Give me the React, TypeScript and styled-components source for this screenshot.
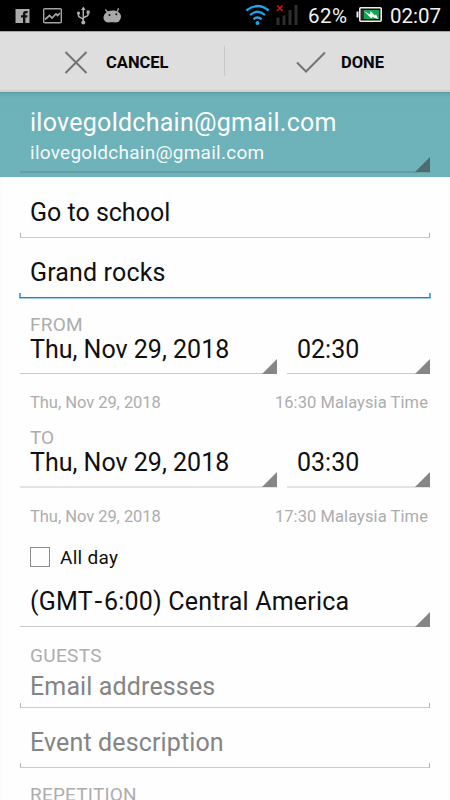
import React from 'react';
import styled, { createGlobalStyle } from 'styled-components';

const GlobalStyle = createGlobalStyle`
  * { box-sizing: border-box; }
  body { margin: 0; background: #fefefe; font-family: Roboto, sans-serif; }
`;

const Screen = styled.div`
  width: 450px;
  height: 800px;
  overflow: hidden;
  display: flex;
  flex-direction: column;
  background: #fefefe;
`;

const StatusBar = styled.header`
  height: 31px;
  flex: none;
  display: flex;
  align-items: center;
  justify-content: space-between;
  padding: 0 8px 0 14px;
  background: #000;
`;

const StatusText = styled.span<{ $width: number; $spacing?: number }>`
  width: ${p => p.$width}px;
  padding-top: 2px;
  font-size: 20.5px;
  line-height: 29px;
  color: #f2f2f2;
  letter-spacing: ${p => p.$spacing ?? 0}px;
  white-space: nowrap;
`;

const StatusSide = styled.div`
  display: flex;
  align-items: center;
  gap: 8px;
  height: 31px;
`;

const ActionBar = styled.div`
  height: 61px;
  flex: none;
  display: grid;
  grid-template-columns: 224px 1px 225px;
  background: #dedede;
  border-top: 1px solid #a4a4a4;
  border-bottom: 2px solid #cfcfcf;
`;

const Action = styled.button<{ $start: number; $gap: number }>`
  display: flex;
  align-items: center;
  gap: ${p => p.$gap}px;
  padding: 3px 0 0 ${p => p.$start}px;
  border: 0;
  background: none;
  font: 700 16.5px/20px Roboto, sans-serif;
  color: #050505;
`;

const Divider = styled.div`
  width: 1px;
  height: 30px;
  align-self: center;
  background: #c8c8c8;
`;

const Account = styled.div`
  height: 85px;
  flex: none;
  padding: 14px 20px 0;
  background: linear-gradient(#569ba1 0, #66abb2 2px, #6db1b9 6px, #6eb2ba 100%);
  color: #fff;
`;

const AccountInner = styled.div`
  position: relative;
  height: 67px;
  padding-left: 10px;
  border-bottom: 2px solid #669fa5;
`;

const Text = styled.div<{ $size: number; $line: number; $spacing?: number; $color?: string }>`
  font-size: ${p => p.$size}px;
  line-height: ${p => p.$line}px;
  letter-spacing: ${p => p.$spacing ?? 0}px;
  color: ${p => p.$color ?? '#101010'};
  white-space: nowrap;
`;

const WideHyphen = styled.span`
  display: inline-block;
  margin: 0 1.5px 0 2.5px;
  transform: scaleX(1.12);
`;

const Form = styled.main`
  flex: 1;
  margin: 0 1px;
  display: flex;
  flex-direction: column;
  border: solid #fafafa;
  border-width: 0 1px;
  padding: 0 18px;
`;

const Field = styled.div<{ $height: number; $top: number }>`
  position: relative;
  flex: none;
  height: ${p => p.$height}px;
  padding: ${p => p.$top}px 0 0 10px;
`;

const Underline = styled.i<{ $active?: boolean }>`
  position: absolute;
  left: ${p => (p.$active ? -1 : 0)}px;
  right: ${p => (p.$active ? -1 : 0)}px;
  bottom: 0;
  height: 5px;
  border-style: solid;
  border-color: ${p => (p.$active ? 'transparent #5badd6 #1f83bb' : 'transparent #b4b4b4 #cbcbcb')};
  border-width: ${p => (p.$active ? '0 2px 1px' : '0 1px 1px')};
  box-shadow: ${p => (p.$active ? '0 1px 0 #a3cde3' : 'none')};
`;

const Pair = styled.div`
  display: grid;
  grid-template-columns: 257px 143px;
  column-gap: 10px;
  flex: none;
`;

const Spinner = styled.div<{ $height: number; $top: number; $thick?: boolean }>`
  position: relative;
  flex: none;
  height: ${p => p.$height}px;
  padding: ${p => p.$top}px 0 0 10px;
  border-bottom: ${p => (p.$thick ? '2px solid #e3e3e3' : '1px solid #c8c8c8')};
`;

const Corner = styled.i<{ $color?: string }>`
  position: absolute;
  right: 0;
  bottom: -1px;
  width: 15px;
  height: 15px;
  background: ${p => p.$color ?? '#868686'};
  clip-path: polygon(100% 0, 100% 100%, 0 100%);
`;

const LabelRow = styled.div<{ $height: number; $top: number }>`
  flex: none;
  height: ${p => p.$height}px;
  padding: ${p => p.$top}px 0 0 10px;
`;

const LocalTime = styled.div<{ $height: number }>`
  flex: none;
  display: flex;
  justify-content: space-between;
  height: ${p => p.$height}px;
  padding: 18px 2px 0 10px;
`;

const CheckRow = styled.div`
  flex: none;
  display: flex;
  align-items: center;
  gap: 10px;
  height: 26px;
  padding-left: 10px;
`;

const CheckLabel = styled(Text)`
  padding-top: 2px;
`;

const Box = styled.span`
  width: 20px;
  height: 20px;
  border: 1px solid #8d8d8d;
`;

const GREY = '#adadad';
const HINT = '#848484';

function NotificationIcons() {
  return (
    <svg width="110" height="31" viewBox="14 0 110 31">
      <rect x="15.5" y="9" width="14" height="14" fill="#ababab" />
      <path d="M23 23v-5.400h-2v-2.300h2v-1.500c0-2 1-2.900 2.800-2.900h1.800v2.300h-1.200c-.8 0-1 .3-1 1v1.100h2.100l-.3 2.300h-1.800V23z" fill="#111" />
      <rect x="43.700" y="8.700" width="17.600" height="14" rx="1" fill="none" stroke="#a4a4a4" strokeWidth="1.400" />
      <path d="M45 19.500l4.500-4 2.500 2.500 4-4 1.700 1.500L60 13" fill="none" stroke="#a4a4a4" strokeWidth="1.700" />
      <g fill="none" stroke="#b0b0b0" strokeWidth="1.500">
        <path d="M83.300 9v13M78.500 13v3c0 1.500 4.800 2 4.800 4M88 12v3c0 1.500-4.700 1.500-4.700 3.500" />
      </g>
      <path d="M83.300 6.500l2.300 3.600H81zM86.600 10.500h3v3.200h-3z" fill="#b0b0b0" />
      <circle cx="78.500" cy="13" r="1.600" fill="#b0b0b0" />
      <circle cx="83.300" cy="22.400" r="2" fill="#b0b0b0" />
      <path d="M103.500 18c0-4.500 4-7.500 9-7.500s8.700 2.500 8.500 6.500c-.2 2.200-1.300 2.700-2 4.500-2 1.300-4.300.8-6.500.8-3 0-5 .6-7-.5-.8-1.200-2-2-2-3.800z" fill="#a9a9a9" />
      <path d="M108 12.500l-2.700-3M117 12l1.600-3.800" stroke="#a9a9a9" strokeWidth="1.300" />
      <circle cx="109.500" cy="15" r="1" fill="#111" />
      <circle cx="116.300" cy="14.300" r="1" fill="#111" />
    </svg>
  );
}

function WifiSignalIcons() {
  return (
    <svg width="55" height="31" viewBox="245 0 55 31">
      <g fill="none" stroke="#1ba5ea" strokeWidth="2.300">
        <path d="M246.300 10.500q11.200-9 22.400 0M250 15q7.500-6.500 15 0M253.500 19.300q4-3.600 8 0" />
      </g>
      <circle cx="257.500" cy="23" r="2" fill="#1ba5ea" />
      <path d="M276.500 17.500h3V25h-3zM282.500 15.500h3V25h-3zM288.500 10h3v15h-3zM294.500 5h3v20h-3z" fill="#2e2e2e" />
      <path d="M277 5.500l5.500 5.500M282.500 5.500L277 11" stroke="#c8161b" strokeWidth="1.700" />
    </svg>
  );
}

function BatteryIcon() {
  return (
    <svg width="26" height="31" viewBox="356 0 26 31">
      <rect x="359.800" y="7.800" width="21.400" height="13.400" rx="1" fill="#111" stroke="#ededed" strokeWidth="1.600" />
      <path d="M356.500 11.500h2v6h-2z" fill="#ededed" />
      <path d="M364 10h15v9h-15z" fill="#13a455" />
      <path d="M361.500 10h2.500v9h-2.500z" fill="#343434" />
      <path d="M364 11l6 3.500.5-3.500 4.500 4.500 1-1.200 2.300 4.700-6-2-1 1.500z" fill="#fff" />
    </svg>
  );
}

interface DateTimeProps {
  date: string;
  time: string;
  height: number;
  thick?: boolean;
}

function DateTime({ date, time, thick, height }: DateTimeProps) {
  return (
    <Pair>
      <Spinner $height={height} $top={1} $thick={thick}>
        <Text $size={25} $line={30}>{date}</Text>
        <Corner />
      </Spinner>
      <Spinner $height={height} $top={1} $thick={thick}>
        <Text $size={25} $line={30}>{time}</Text>
        <Corner />
      </Spinner>
    </Pair>
  );
}

export default function App() {
  return (
    <>
      <GlobalStyle />
      <Screen>
        <StatusBar>
          <NotificationIcons />
          <StatusSide>
            <WifiSignalIcons />
            <StatusText $width={40} $spacing={0.5}>62%</StatusText>
            <BatteryIcon />
            <StatusText $width={52}>02:07</StatusText>
          </StatusSide>
        </StatusBar>
        <ActionBar>
          <Action $start={64} $gap={18}>
            <svg width="24" height="24" viewBox="0 0 24 24" fill="none" stroke="#737373" strokeWidth="2">
              <path d="M1.500 1l21 21M22.500 1l-21 21" />
            </svg>
            CANCEL
          </Action>
          <Divider />
          <Action $start={71} $gap={15}>
            <svg width="30" height="24" viewBox="0 0 30 24" fill="none" stroke="#737373" strokeWidth="2">
              <path d="M1 11.500l9 9L29 1.500" />
            </svg>
            DONE
          </Action>
        </ActionBar>
        <Account>
          <AccountInner>
            <Text $size={25} $line={33} $spacing={0.27} $color="#fff">ilovegoldchain@gmail.com</Text>
            <Text $size={19} $line={27} $spacing={0.26} $color="#f6fafa">ilovegoldchain@gmail.com</Text>
            <Corner $color="#4f6d70" />
          </AccountInner>
        </Account>
        <Form>
          <Field $height={61} $top={21}>
            <Text $size={25} $line={30}>Go to school</Text>
            <Underline />
          </Field>
          <Field $height={60} $top={20}>
            <Text $size={25} $line={30} $spacing={0.15}>Grand rocks</Text>
            <Underline $active />
          </Field>
          <LabelRow $height={36} $top={15}>
            <Text $size={19} $line={24} $spacing={0.25} $color={GREY}>FROM</Text>
          </LabelRow>
          <DateTime date="Thu, Nov 29, 2018" time="02:30" height={40} />
          <LocalTime $height={52}>
            <Text $size={16.5} $line={22} $spacing={-0.04} $color={GREY}>Thu, Nov 29, 2018</Text>
            <Text $size={16.5} $line={22} $spacing={0.08} $color={GREY}>16:30 Malaysia Time</Text>
          </LocalTime>
          <LabelRow $height={21} $top={0}>
            <Text $size={19} $line={24} $color={GREY}>TO</Text>
          </LabelRow>
          <DateTime date="Thu, Nov 29, 2018" time="03:30" height={41} thick />
          <LocalTime $height={56}>
            <Text $size={16.5} $line={22} $spacing={-0.04} $color={GREY}>Thu, Nov 29, 2018</Text>
            <Text $size={16.5} $line={22} $spacing={0.08} $color={GREY}>17:30 Malaysia Time</Text>
          </LocalTime>
          <CheckRow>
            <Box />
            <CheckLabel $size={19} $line={26} $spacing={0.28}>All day</CheckLabel>
          </CheckRow>
          <Spinner $height={57} $top={17}>
            <Text $size={25} $line={30} $spacing={0.2}>
              (GMT<WideHyphen>-</WideHyphen>6:00) Central America
            </Text>
            <Corner />
          </Spinner>
          <LabelRow $height={43} $top={17}>
            <Text $size={19} $line={24} $spacing={0.35} $color={GREY}>GUESTS</Text>
          </LabelRow>
          <Field $height={38} $top={2}>
            <Text $size={25} $line={30} $spacing={0.13} $color={HINT}>Email addresses</Text>
            <Underline />
          </Field>
          <Field $height={60} $top={20}>
            <Text $size={25} $line={30} $spacing={0.13} $color={HINT}>Event description</Text>
            <Underline />
          </Field>
          <LabelRow $height={40} $top={15}>
            <Text $size={19} $line={24} $spacing={0.2} $color={GREY}>REPETITION</Text>
          </LabelRow>
        </Form>
      </Screen>
    </>
  );
}
